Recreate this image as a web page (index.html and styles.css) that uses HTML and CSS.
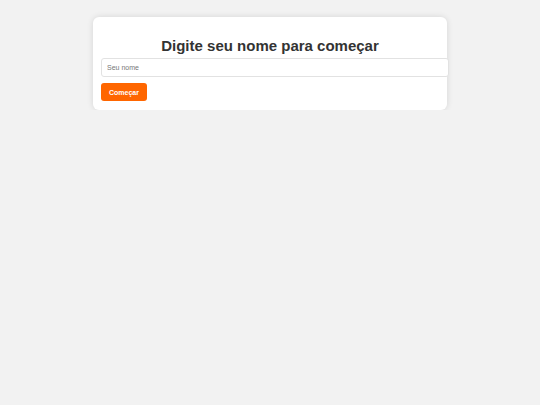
FILE: index.html
```html
<!DOCTYPE html>
<html lang="pt">
<head>
<meta charset="utf-8">
<title>Começar</title>
<link rel="stylesheet" href="styles.css">
</head>
<body>
<div class="card">
  <h1 class="title">Digite seu nome para começar</h1>
  <input class="name-input" type="text" placeholder="Seu nome">
  <button class="start-btn">Começar</button>
</div>
</body>
</html>
```
FILE: styles.css
```css
html, body {
  margin: 0;
  padding: 0;
  background: #f2f2f2;
  font-family: "Liberation Sans", Arial, sans-serif;
}
body {
  padding-top: 17px;
}
.card {
  width: 338px;
  margin: 0 auto;
  background: #ffffff;
  border-radius: 6px;
  padding: 20px 8px 9px;
  box-shadow: 0 0 6px rgba(0, 0, 0, 0.12);
}
.title {
  margin: 0 0 3px;
  text-align: center;
  font-size: 15px;
  line-height: 18px;
  font-weight: bold;
  color: #333333;
}
.name-input {
  display: block;
  box-sizing: border-box;
  width: 348px;
  height: 19px;
  margin: 0 0 6px;
  padding: 0 5px;
  border: 1px solid #e2e2e2;
  border-radius: 3px;
  font-family: "Liberation Sans", Arial, sans-serif;
  font-size: 7px;
  color: #333;
  background: #fff;
}
.name-input::placeholder {
  color: #777777;
}
.start-btn {
  display: block;
  width: 46px;
  height: 18px;
  padding: 0;
  border: none;
  border-radius: 3px;
  background: #ff6600;
  color: #ffffff;
  font-family: "Liberation Sans", Arial, sans-serif;
  font-size: 7px;
  font-weight: bold;
}
```
